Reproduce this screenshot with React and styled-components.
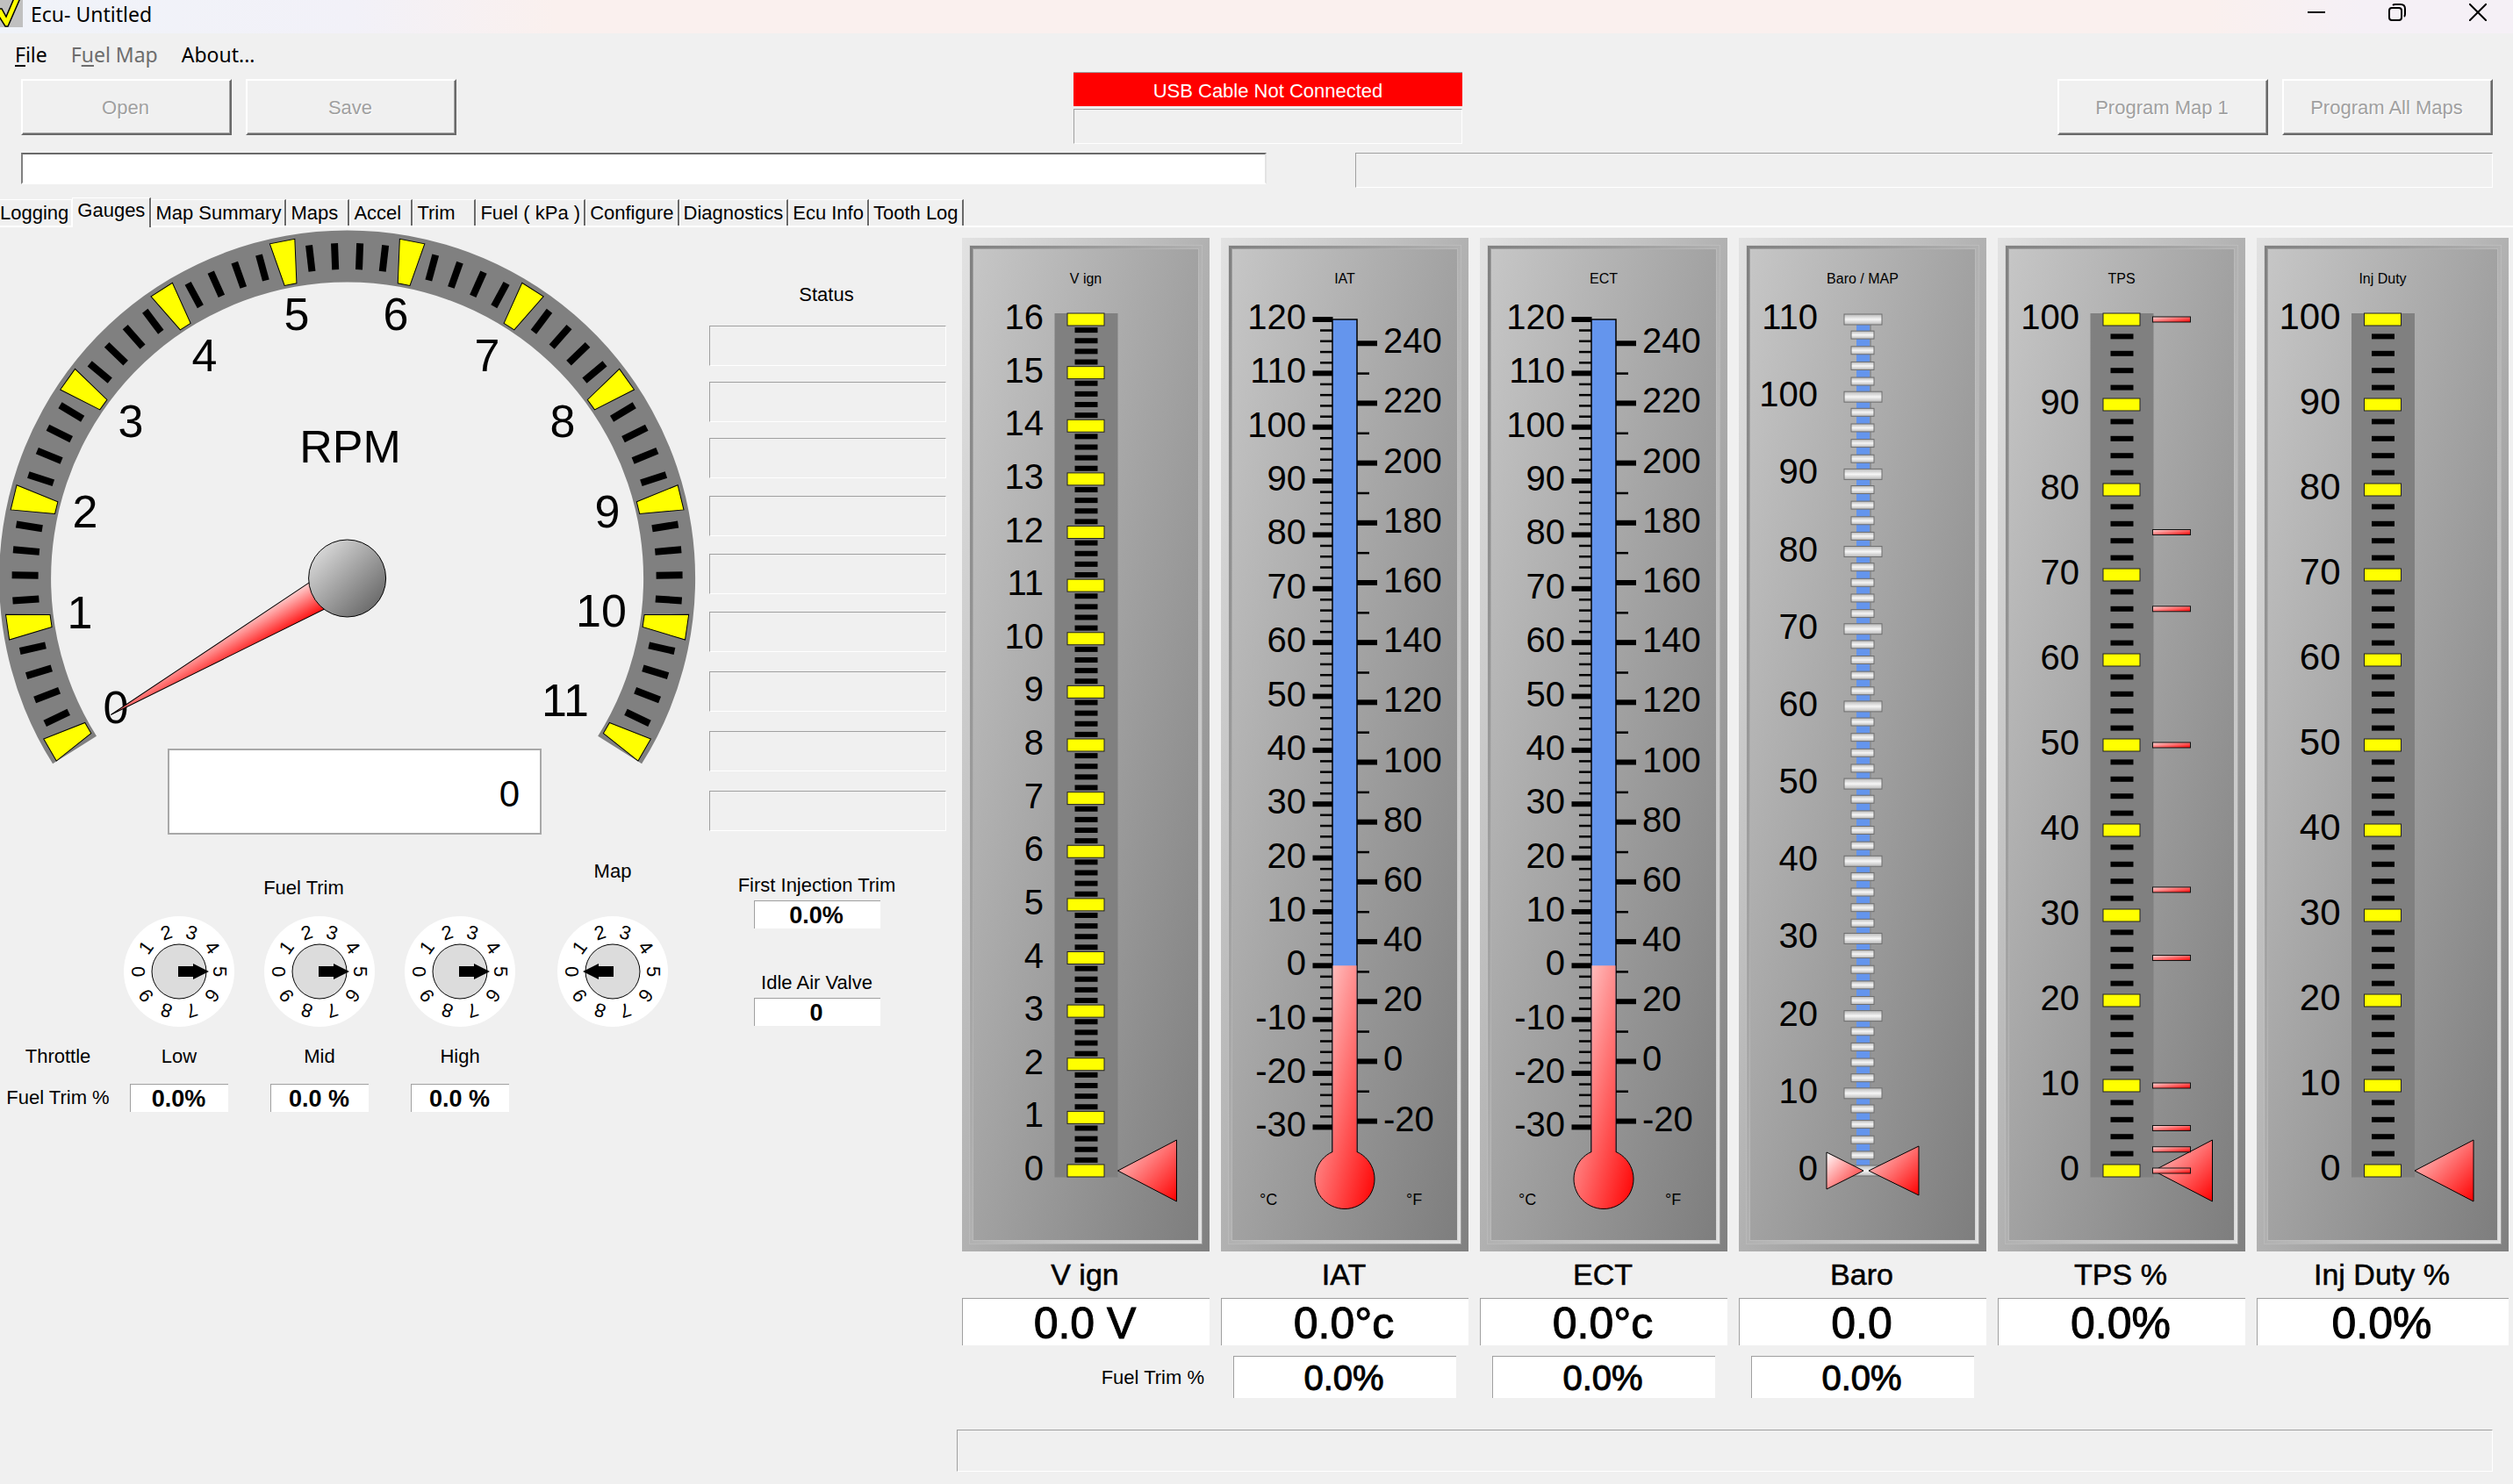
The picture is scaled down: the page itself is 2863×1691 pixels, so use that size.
import * as React from "react";
import styled, { createGlobalStyle } from "styled-components";

const GlobalStyle = createGlobalStyle`
  * {
    box-sizing: border-box;
  }
  body {
    margin: 0;
    background: #f0f0f0;
    color: #000;
    font-family: "Liberation Sans", Arial, sans-serif;
    font-size: 22px;
    line-height: 26px;
  }
  button,
  input {
    font: inherit;
    color: inherit;
  }
`;

const Window = styled.div`
  display: flex;
  flex-direction: column;
  min-height: 100vh;
  overflow: hidden;
`;

const TitleBar = styled.header`
  display: flex;
  height: 38px;
  background: linear-gradient(to right, #f0f3f9 0%, #f2f1f8 14%, #faf0ee 22%, #faf0ee 88%, #f5f0f6 94%);

  h1 {
    flex: 1;
    margin: 0 0 0 9px;
    font: 400 23px/32px "Noto Sans", sans-serif;
  }
`;

const CaptionButton = styled.button`
  display: flex;
  justify-content: center;
  width: 92px;
  height: 38px;
  padding: 4px 0 0;
  border: 0;
  background: none;

  &:last-child {
    margin-right: -6px;
  }
`;

const MenuBar = styled.nav`
  display: flex;
  gap: 27px;
  height: 44px;
  padding: 4px 17px 0;
`;

const MenuItem = styled.button`
  padding: 0;
  border: 0;
  background: none;
  color: ${(props) => (props.disabled ? "#6d6d6d" : "#000")};
  font: 400 23px/34px "Noto Sans", sans-serif;

  u {
    text-underline-offset: 3px;
  }
`;

const Toolbar = styled.div`
  display: grid;
  grid-template-columns: 1199fr 443fr 1174fr;
  padding: 0 23px 0 24px;
`;

const ButtonGroup = styled.div`
  display: flex;
  gap: 16px;
  padding-top: 8px;
  justify-content: ${(props) => (props.$end ? "flex-end" : "flex-start")};
`;

const PushButton = styled.button`
  width: 240px;
  height: 64px;
  padding: 2px 2px 0 0;
  border: 2px solid;
  border-color: #fff #696969 #696969 #fff;
  box-shadow: inset -1px -1px #a0a0a0;
  background: #f0f0f0;

  &:disabled {
    color: #a0a0a0;
    text-shadow: 1px 1px #fff;
  }
`;

const Sunken = styled.div`
  height: ${(props) => props.$height || 46}px;
  border: 1px solid;
  border-color: #a0a0a0 #fff #fff #a0a0a0;
`;

const Connection = styled.div`
  display: flex;
  flex-direction: column;
  gap: 3px;
`;

const ConnectionState = styled.div`
  height: 39px;
  border-top: 1px solid #a0a0a0;
  background: #f00;
  color: #fff;
  line-height: 42px;
  text-align: center;
`;

const FileRow = styled.div`
  display: grid;
  grid-template-columns: 1419fr 1296fr;
  gap: 101px;
  align-items: start;
  margin-top: 10px;
  padding: 0 23px 0 24px;
`;

const FileInput = styled.input`
  width: 100%;
  height: 36px;
  padding: 0 6px;
  border: 2px solid;
  border-color: #696969 #e3e3e3 #fff #808080;
  background: #fff;
`;

const TabStrip = styled.div`
  display: flex;
  align-items: flex-end;
  height: 34px;
  margin-top: 11px;
  border-bottom: 2px solid #fff;
`;

const Tab = styled.button`
  height: 30px;
  min-width: 72px;
  padding: 1px 4px 0;
  border: solid;
  border-width: 1px 2px 0 1px;
  border-color: #fff #696969 #fff #fff;
  background: none;
  text-align: left;
  white-space: nowrap;

  &:first-child {
    padding: 1px 3px 0 0;
    border-width: 1px 1px 0 0;
    border-right-color: #fff;
  }

  &[aria-selected="true"] {
    height: 34px;
    margin-bottom: -2px;
    padding: 0 5px 6px;
    background: #f0f0f0;
  }
`;

const Page = styled.main`
  display: grid;
  grid-template-columns: 1090fr 1773fr;
`;

const Engine = styled.section`
  display: grid;
  grid-template-columns: 792fr 298fr;
  align-items: start;
`;

const Tachometer = styled.div`
  padding-top: 3px;

  svg {
    display: block;
    width: 100%;
    overflow: visible;
  }
`;

const Digital = styled.output`
  position: relative;
  display: block;
  width: 426px;
  height: 98px;
  margin: -18px 0 0 191px;
  padding-right: 23px;
  border: 2px solid #a8a8a8;
  background: #fff;
  font-size: 42px;
  line-height: 100px;
  text-align: right;
`;

const TrimGrid = styled.div`
  display: grid;
  grid-template-columns: 124px 160px 160px 160px 1fr;
  grid-template-rows: 92px 127px;
  justify-items: center;
  white-space: nowrap;
`;

const TrimHeading = styled.div`
  grid-column: ${(props) => props.$column};
  align-self: end;
  padding: ${(props) => props.$padding};
`;

const ThrottleGrid = styled.div`
  display: grid;
  grid-template-columns: 124px 160px 160px 160px;
  row-gap: 18px;
  justify-items: center;
  align-items: center;
  margin-top: 21px;
  white-space: nowrap;
`;

const RowTitle = styled.span`
  padding-left: 8px;
`;

const Reading = styled.output`
  display: block;
  width: ${(props) => props.$width || 112}px;
  height: 32px;
  padding-right: 2px;
  border: solid #a0a0a0;
  border-width: 1px 0 0 1px;
  background: #fff;
  font-size: 27px;
  font-weight: 700;
  line-height: 33px;
  text-align: center;
`;

const StatusColumn = styled.div`
  display: flex;
  flex-direction: column;
  padding: 64px 12px 0 16px;
`;

const StatusTitle = styled.div`
  padding-right: 3px;
  text-align: center;
`;

const StatusList = styled.div`
  height: 576px;
  margin-top: 22px;

  > * + * {
    margin-top: 18px;
  }
  > :nth-child(n + 4) {
    margin-top: 20px;
  }
  > :nth-child(n + 7) {
    margin-top: 22px;
  }
`;

const SideReading = styled.div`
  display: flex;
  flex-direction: column;
  align-items: center;
  gap: 4px;
  margin-top: 49px;
  padding-right: 25px;
`;

const Instruments = styled.section`
  display: flex;
  flex-direction: column;
  padding-top: 12px;
`;

const InstrumentRow = styled.div`
  display: grid;
  grid-template-columns: repeat(5, 282fr) 287fr;
  gap: 13px;
  padding: 0 5px 0 6px;
`;

const Instrument = styled.div`
  display: flex;
  flex-direction: column;
  min-width: 0;

  label {
    margin: 6px 0 7px;
    padding-right: 2px;
    font-size: 34px;
    line-height: 40px;
    text-align: center;
    -webkit-text-stroke: 0.5px;
  }
`;

const Bezel = styled.div`
  padding: 9px;
  background: linear-gradient(to bottom right, #e2e2e2, #808080);
`;

const Groove = styled.div`
  padding: 4px;
  outline: 1px solid rgba(200, 200, 200, 0.4);
  background: linear-gradient(to bottom right, #808080, #e2e2e2);
`;

const Face = styled.div`
  outline: 1px solid rgba(200, 200, 200, 0.4);
  background: linear-gradient(to bottom right, #c6c6c6, #7e7e7e);

  svg {
    display: block;
    width: 100%;
    height: 1129px;
  }
`;

const BigReading = styled.output`
  display: block;
  height: 54px;
  padding-right: 3px;
  border: solid #a0a0a0;
  border-width: 1px 0 0 1px;
  background: #fff;
  font-size: 50px;
  line-height: 56px;
  text-align: center;
  -webkit-text-stroke: 1px;
`;

const TrimReading = styled(BigReading)`
  height: 48px;
  margin: 0 14px;
  font-size: 40px;
  line-height: 48px;
`;

const TrimRow = styled(InstrumentRow)`
  margin-top: 12px;
  align-items: center;

  label {
    padding: 2px 6px 0 0;
    text-align: right;
  }
`;

const FooterBox = styled(Sunken)`
  margin: 36px 23px 14px 0;
`;

const range = (from, to, step) => {
  const out = [];
  for (let v = from; v <= to; v += step) out.push(v);
  return out;
};

// ---- tachometer ----

const CX = 395.6;
const CY = 397;

const polar = (radius, degrees) => {
  const a = (degrees * Math.PI) / 180;
  return [CX + radius * Math.cos(a), CY + radius * Math.sin(a)];
};

const arcBand = (outer, inner, from, to) => {
  const [a, b, c, d] = [polar(outer, from), polar(outer, to), polar(inner, to), polar(inner, from)];
  return `M${a} A${outer} ${outer} 0 1 1 ${b} L${c} A${inner} ${inner} 0 1 0 ${d} Z`;
};

// centre and baseline of each number on the dial, 0 to 11
const dialNumbers = [
  [132, 562],
  [91, 454],
  [97, 339],
  [149, 236],
  [233, 161],
  [338, 114],
  [451, 114],
  [555, 161],
  [641, 236],
  [692, 339],
  [685, 452],
  [644, 554],
];

const RpmGauge = ({ value = 0 }) => {
  const angle = (n) => 150 + (n * 240) / 11;
  return (
    <svg viewBox="0 0 792 609" role="img" aria-label="RPM">
      <defs>
        <linearGradient id="hub" x1="0" y1="0" x2="1" y2="1">
          <stop offset="0.1" stopColor="#dcdcdc" />
          <stop offset="0.9" stopColor="#666" />
        </linearGradient>
        <linearGradient id="needle" gradientUnits="userSpaceOnUse" x1="0" y1="18" x2="0" y2="-18">
          <stop offset="0" stopColor="#ff0c0c" />
          <stop offset="1" stopColor="#ffd4d4" />
        </linearGradient>
      </defs>
      <path d={arcBand(396.5, 337.5, 147.8, 392.2)} fill="#808080" />
      {range(0, 55, 1).map((i) => (
        <g key={i} transform={`translate(${CX} ${CY}) rotate(${angle(i / 5)})`}>
          {i % 5 === 0 ? (
            <path d="M341 -7 L391 -14.5 V14.5 L341 7 Z" fill="#ff0" stroke="#000" strokeWidth="1" />
          ) : (
            <rect x="352" y="-4" width="30" height="8" />
          )}
        </g>
      ))}
      <g fontSize="52" textAnchor="middle">
        {dialNumbers.map(([x, y], n) => (
          <text key={n} x={x} y={y}>
            {n}
          </text>
        ))}
        <text x="399" y="265">
          RPM
        </text>
      </g>
      <g transform={`translate(${CX} ${CY}) rotate(${angle(value / 1000) - 180})`}>
        <path d="M-311 0 L0 20 V-20 Z" fill="url(#needle)" stroke="#000" strokeWidth="1" />
      </g>
      <circle cx={CX} cy={CY} r="44" fill="url(#hub)" stroke="#000" strokeWidth="1" />
    </svg>
  );
};

// ---- rotary switches ----

const Rotary = ({ name, position }) => (
  <svg width="128" height="127" viewBox="-64 -64 128 127" role="img" aria-label={name}>
    <circle r="63" fill="#fff" />
    <circle r="31" fill="#dcdcdc" stroke="#000" />
    {range(0, 9, 1).map((n) => (
      <text key={n} fontSize="22" textAnchor="middle" transform={`rotate(${n * 36 - 90})`} y="-39">
        {n}
      </text>
    ))}
    <path transform={`rotate(${position * 36 + 180})`} d="M-1 -6 H16 V-9 L34 0 L16 9 V6 H-1 Z" />
  </svg>
);

// ---- vertical instruments ----

const TOP = 93;
const BOTTOM = 1063;

const FaceSvg = ({ title, children }) => (
  <Bezel>
    <Groove>
      <Face>
        <svg viewBox="13 13 256 1129" role="img" aria-label={title}>
          <defs>
            <linearGradient id="red" x1="0" y1="0" x2="1" y2="1">
              <stop offset="0" stopColor="#ffdcdc" />
              <stop offset="1" stopColor="#f00" />
            </linearGradient>
            <linearGradient id="pale" x1="0" y1="0" x2="1" y2="1">
              <stop offset="0" stopColor="#fff" />
              <stop offset="1" stopColor="#ff2020" />
            </linearGradient>
            <linearGradient id="silver" x1="0" y1="0" x2="0" y2="1">
              <stop offset="0" stopColor="#b8b8b8" />
              <stop offset="0.5" stopColor="#f6f6f6" />
              <stop offset="1" stopColor="#b8b8b8" />
            </linearGradient>
          </defs>
          <text x="141" y="52" fontSize="16" textAnchor="middle">
            {title}
          </text>
          {children}
        </svg>
      </Face>
    </Groove>
  </Bezel>
);

const BarGauge = ({ title, max, step, divisions = 5, labelSize = 40, marks = [] }) => {
  const y = (v) => BOTTOM - (v / max) * (BOTTOM - TOP);
  const count = (max / step) * divisions;
  return (
    <FaceSvg title={title}>
      <rect x="105.5" y="86" width="72" height="984.5" fill="#808080" />
      {range(0, count, 1).map((i) => {
        const v = (i / divisions) * step;
        return i % divisions === 0 ? (
          <g key={i}>
            <rect x="120" y={y(v) - 7} width="42" height="14" fill="#ff0" stroke="#222" />
            <text x="93" y={y(v) + 11} fontSize={labelSize} textAnchor="end">
              {v}
            </text>
          </g>
        ) : (
          <rect key={i} x="128.5" y={y(v) - 3} width="26" height="6" />
        );
      })}
      <path d="M177.5 1063 L244.5 1028 V1098 Z" fill="url(#red)" stroke="#000" />
      {marks.map((v) => (
        <rect key={v} x="176.5" y={y(v) - 3} width="43" height="6" fill="url(#red)" stroke="#111" />
      ))}
    </FaceSvg>
  );
};

const Thermometer = ({ title, value = 0 }) => {
  const y = (c) => TOP + (120 - c) * 6.136;
  const fahrenheit = (f) => y(((f - 32) * 5) / 9);
  return (
    <FaceSvg title={title}>
      {range(-30, 120, 2).map((c) =>
        c % 10 === 0 ? (
          <g key={c}>
            <rect x="104.5" y={y(c) - 3} width="23" height="6" />
            <text x="97" y={y(c) + 11} fontSize="40" textAnchor="end">
              {c}
            </text>
          </g>
        ) : (
          <rect key={c} x="113" y={y(c) - 1} width="14" height="2.5" />
        )
      )}
      {range(-20, 240, 10).map((f) =>
        f % 20 === 0 ? (
          <g key={f}>
            <rect x="155" y={fahrenheit(f) - 3} width="23" height="6" />
            <text x="185" y={fahrenheit(f) + 11} fontSize="40">
              {f}
            </text>
          </g>
        ) : (
          <rect key={f} x="155" y={fahrenheit(f) - 1} width="14" height="2.5" />
        )
      )}
      <path d={`M127 ${TOP} H155 V1042 H127 Z`} fill="#6495ed" stroke="#000" strokeWidth="1.5" />
      <path d={`M127.5 ${y(value)} V1041.5 A34 34 0 1 0 154.5 1041.5 V${y(value)} Z`} fill="url(#red)" />
      <path d="M127 1041.5 A34 34 0 1 0 155 1041.5" fill="none" stroke="#000" />
      <g fontSize="18">
        <text x="44" y="1102">
          °C
        </text>
        <text x="211" y="1102">
          °F
        </text>
      </g>
    </FaceSvg>
  );
};

const PressureGauge = ({ title }) => {
  const y = (v) => BOTTOM - (v / 110) * (BOTTOM - TOP);
  return (
    <FaceSvg title={title}>
      <rect x="148" y={TOP} width="3" height={BOTTOM - TOP} fill="#8b8f96" />
      <rect x="134" y={TOP} width="15" height={BOTTOM - TOP} fill="#6495ed" />
      {range(0, 110, 2).map((v) =>
        v % 10 === 0 ? (
          <g key={v}>
            <rect x="120" y={y(v) - 6} width="43" height="12" fill="url(#silver)" stroke="#6e6e6e" />
            <text x="90" y={y(v) + 11} fontSize="40" textAnchor="end">
              {v}
            </text>
          </g>
        ) : (
          <rect key={v} x="128" y={y(v) - 4.5} width="26" height="9" fill="url(#silver)" stroke="#6e6e6e" />
        )
      )}
      <path d="M100 1042 L142 1063 L100 1084 Z" fill="url(#pale)" stroke="#000" />
      <path d="M205 1035 L148 1063 L205 1091 Z" fill="url(#red)" stroke="#000" />
    </FaceSvg>
  );
};

const TPS_SITES = [100, 75, 66, 50, 33, 25, 10, 5, 2.5, 0];

const instruments = [
  { id: "vign", label: "V ign", reading: "0.0 V", gauge: <BarGauge title="V ign" max={16} step={1} /> },
  { id: "iat", label: "IAT", reading: "0.0°c", gauge: <Thermometer title="IAT" /> },
  { id: "ect", label: "ECT", reading: "0.0°c", gauge: <Thermometer title="ECT" /> },
  { id: "baro", label: "Baro", reading: "0.0", gauge: <PressureGauge title="Baro / MAP" /> },
  { id: "tps", label: "TPS %", reading: "0.0%", gauge: <BarGauge title="TPS" max={100} step={10} marks={TPS_SITES} /> },
  { id: "duty", label: "Inj Duty %", reading: "0.0%", gauge: <BarGauge title="Inj Duty" max={100} step={10} labelSize={42} /> },
];

const tabs = [
  "Logging",
  "Gauges",
  "Map Summary",
  "Maps",
  "Accel",
  "Trim",
  "Fuel ( kPa )",
  "Configure",
  "Diagnostics",
  "Ecu Info",
  "Tooth Log",
];

const App = () => (
  <Window>
    <GlobalStyle />
    <TitleBar>
      <svg width="26" height="31" viewBox="0 0 26 31" aria-hidden="true">
        <rect width="26" height="31" fill="#c0c0c0" />
        <path d="M-4 10 L2 10 L7 19 L16 -2 H23 L9 30 H6 L-4 14 Z" fill="#ff0" stroke="#000" strokeWidth="1.5" />
      </svg>
      <h1>Ecu- Untitled</h1>
      <CaptionButton aria-label="Minimize">
        <svg width="20" height="20" fill="none" stroke="#000" strokeWidth="2">
          <path d="M0 10 H20" />
        </svg>
      </CaptionButton>
      <CaptionButton aria-label="Restore">
        <svg width="20" height="20" fill="none" stroke="#000" strokeWidth="2">
          <rect x="1" y="5" width="14" height="14" rx="3" />
          <path d="M5 2 Q6 1 8 1 H14 Q19 1 19 6 V12 Q19 14 18 15" />
        </svg>
      </CaptionButton>
      <CaptionButton aria-label="Close">
        <svg width="20" height="20" fill="none" stroke="#000" strokeWidth="2">
          <path d="M0 0 L20 20 M20 0 L0 20" />
        </svg>
      </CaptionButton>
    </TitleBar>

    <MenuBar>
      <MenuItem>
        <u>F</u>ile
      </MenuItem>
      <MenuItem disabled>
        F<u>u</u>el Map
      </MenuItem>
      <MenuItem>About...</MenuItem>
    </MenuBar>

    <Toolbar>
      <ButtonGroup>
        <PushButton disabled>Open</PushButton>
        <PushButton disabled>Save</PushButton>
      </ButtonGroup>
      <Connection>
        <ConnectionState>USB Cable Not Connected</ConnectionState>
        <Sunken $height={40} />
      </Connection>
      <ButtonGroup $end>
        <PushButton disabled>Program Map 1</PushButton>
        <PushButton disabled>Program All Maps</PushButton>
      </ButtonGroup>
    </Toolbar>

    <FileRow>
      <FileInput type="text" aria-label="Map description" />
      <Sunken $height={40} />
    </FileRow>

    <TabStrip role="tablist">
      {tabs.map((tab) => (
        <Tab key={tab} role="tab" aria-selected={tab === "Gauges"}>
          {tab}
        </Tab>
      ))}
    </TabStrip>

    <Page>
      <Engine>
        <div>
          <Tachometer>
            <RpmGauge />
          </Tachometer>
          <Digital>0</Digital>
          <TrimGrid>
            <TrimHeading $column="2 / 5" $padding="0 36px 18px 0">
              Fuel Trim
            </TrimHeading>
            <TrimHeading $column="5" $padding="0 0 37px">
              Map
            </TrimHeading>
            <span />
            <Rotary name="Low" position={5} />
            <Rotary name="Mid" position={5} />
            <Rotary name="High" position={5} />
            <Rotary name="Map" position={0} />
          </TrimGrid>
          <ThrottleGrid>
            <RowTitle>Throttle</RowTitle>
            <label htmlFor="low">Low</label>
            <label htmlFor="mid">Mid</label>
            <label htmlFor="high">High</label>
            <RowTitle>Fuel Trim %</RowTitle>
            <Reading id="low">0.0%</Reading>
            <Reading id="mid">0.0 %</Reading>
            <Reading id="high">0.0 %</Reading>
          </ThrottleGrid>
        </div>
        <StatusColumn>
          <StatusTitle>Status</StatusTitle>
          <StatusList>
            {range(1, 9, 1).map((n) => (
              <Sunken key={n} />
            ))}
          </StatusList>
          <SideReading>
            <label htmlFor="first-injection">First Injection Trim</label>
            <Reading id="first-injection" $width={144}>
              0.0%
            </Reading>
          </SideReading>
          <SideReading>
            <label htmlFor="idle-valve">Idle Air Valve</label>
            <Reading id="idle-valve" $width={144}>
              0
            </Reading>
          </SideReading>
        </StatusColumn>
      </Engine>

      <Instruments>
        <InstrumentRow>
          {instruments.map((item) => (
            <Instrument key={item.id}>
              {item.gauge}
              <label htmlFor={item.id}>{item.label}</label>
              <BigReading id={item.id}>{item.reading}</BigReading>
            </Instrument>
          ))}
        </InstrumentRow>
        <TrimRow>
          <label htmlFor="iat-trim">Fuel Trim %</label>
          <TrimReading id="iat-trim">0.0%</TrimReading>
          <TrimReading>0.0%</TrimReading>
          <TrimReading>0.0%</TrimReading>
        </TrimRow>
        <FooterBox $height={48} />
      </Instruments>
    </Page>
  </Window>
);

export default App;
